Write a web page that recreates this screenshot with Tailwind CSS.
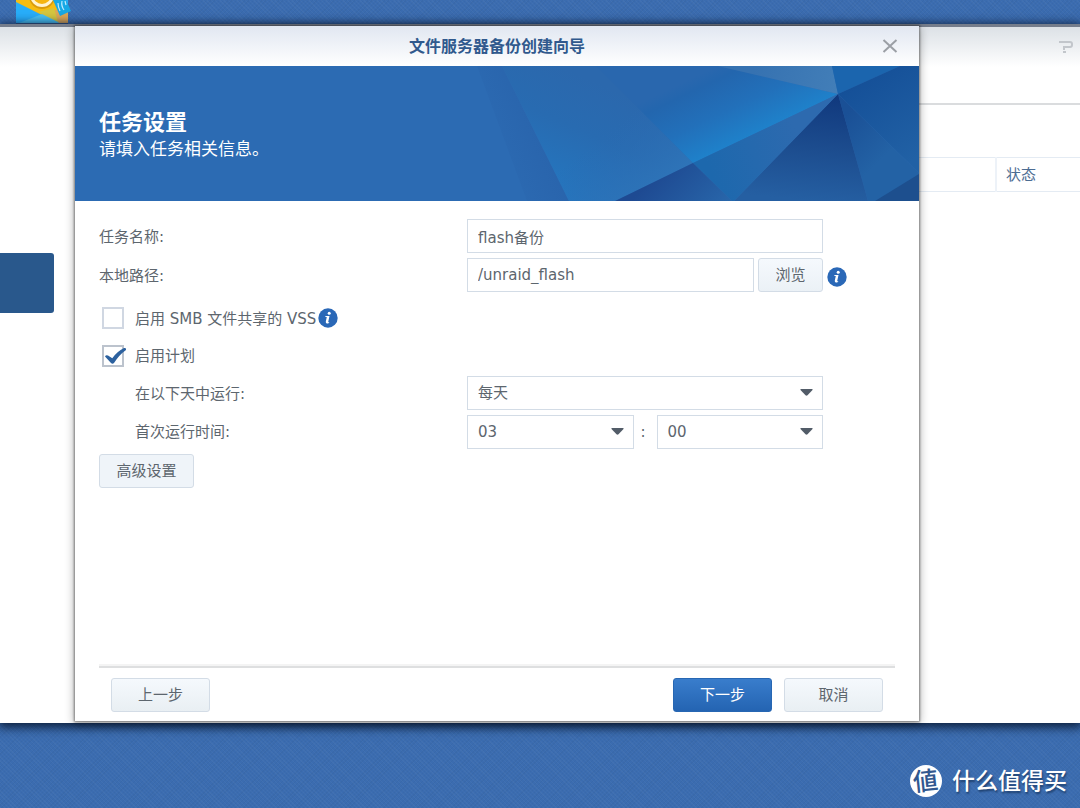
<!DOCTYPE html>
<html lang="zh-CN">
<head>
<meta charset="utf-8">
<meta name="viewport" content="width=device-width, initial-scale=1">
<title>文件服务器备份创建向导</title>
<script src="https://cdn.jsdelivr.net/npm/@tailwindcss/browser@4"></script>
</head>
<body class="flex min-h-screen flex-col overflow-x-hidden bg-[#3b6cb0] bg-[repeating-linear-gradient(45deg,#ffffff08_0px,#ffffff08_1px,transparent_1px,transparent_3px),repeating-linear-gradient(-45deg,#00000008_0px,#00000008_1px,transparent_1px,transparent_3px)] font-['DejaVu_Sans','Noto_Sans_CJK_SC',sans-serif] text-[15px] text-[#5d666e]">

<!-- Desktop strip -->
<header class="flex h-6 items-start pl-4">
  <svg class="h-6 w-14" viewBox="0 0 56 24" aria-hidden="true">
    <path d="M0 0H52V23H0Z" fill="#28aefa"/>
    <path d="M0 0H50V12L42 23L0 2Z" fill="#f6bd12"/>
    <path d="M3 23L34 11L43 23Z" fill="#48c2f5"/>
    <path d="M34 11L52 8V23H43Z" fill="#dfa755"/>
    <path d="M22 12L38 8L42 22L40 21Z" fill="#d6c63e"/>
    <circle cx="26" cy="-4" r="13" fill="#d99b0c"/>
    <circle cx="26" cy="-5" r="12" fill="#fff3cf"/>
    <circle cx="26" cy="-5" r="9" fill="#f6b511"/>
    <path d="M37 0H50L55 11L44 16Z" fill="#17a9e6"/>
    <path d="M42 3Q42 7 44 11M46 1Q45 6 48 10M49 1L50 5" stroke="#bdeaff" stroke-width="1.2" fill="none"/>
    <path d="M0 23.5H52" stroke="#315382"/>
  </svg>
</header>

<div class="relative flex h-[699px] flex-none bg-white shadow-[0_2px_10px_2px_#0b1c38]">
  <!-- Window underneath -->
  <section class="flex flex-1 flex-col border-t-3 border-[#757d8b]" aria-label="备份">
    <div class="flex h-10 flex-none items-center justify-end bg-linear-to-b from-[#dce1e6] to-white pr-[6px]">
      <button aria-label="帮助" class="text-[#c2c6cb]">
        <svg class="h-4 w-4" viewBox="0 0 16 16" fill="none" stroke="currentColor" stroke-width="2"><path d="M1 3H12Q14 3 14 5V6Q14 8 12 8H6V11"/><path d="M5 13H8"/></svg>
      </button>
    </div>
    <div class="flex flex-1">
      <nav class="w-[75px] pt-[186px] pr-[21px]"><a href="#" aria-label="任务" class="block h-[60px] rounded-r-[3px] bg-[#29588c]"></a></nav>
      <div class="flex-1">
        <div class="h-[38px] border-b-2 border-[#dadcde]"></div>
        <table class="mt-[52px] w-full table-fixed border-collapse border-y border-[#e4ebf3] text-[#4c6c92]">
          <thead><tr class="h-[34px]"><td class="border-r-2 border-[#edf2f8]"></td><th class="w-[84px] pt-[2px] pl-[9px] text-left text-[15px] font-normal">状态</th></tr></thead>
        </table>
      </div>
    </div>
  </section>

  <!-- Wizard dialog -->
  <main role="dialog" aria-labelledby="title" class="absolute top-[2px] right-[161px] bottom-[2px] left-[75px] flex flex-col bg-white shadow-[0_0_2px_1px_#00000066,0_2px_9px_1px_#0000004d]">
    <div class="grid h-10 flex-none grid-cols-[49px_1fr_40px] items-center bg-linear-to-b from-[#e1e7f1] to-white pr-[9px]">
      <h1 id="title" class="col-start-2 pt-[2px] text-center text-base leading-none font-bold text-[#30598d]">文件服务器备份创建向导</h1>
      <button aria-label="关闭" class="flex justify-center text-[#9b9fa5]">
        <svg class="h-4 w-4" viewBox="0 0 16 16" fill="none" stroke="currentColor" stroke-width="2"><path d="M1.500 2L14.500 14M14.500 2L1.500 14"/></svg>
      </button>
    </div>

    <div class="flex h-[135px] flex-none justify-between bg-[#2c6bb3] text-white">
      <div class="pt-[45px] pl-6 whitespace-nowrap">
        <h2 class="text-[22px] leading-6 font-bold">任务设置</h2>
        <p class="mt-[2px] text-[17px] leading-6">请填入任务相关信息。</p>
      </div>
      <svg class="h-[135px] w-[442px] flex-none" viewBox="402 0 442 135" aria-hidden="true">
        <defs>
          <linearGradient id="a" gradientUnits="userSpaceOnUse" x1="402" y1="70" x2="465" y2="45"><stop offset="0" stop-color="#2c6bb3"/><stop offset="1" stop-color="#2964ac"/></linearGradient>
          <linearGradient id="b" gradientUnits="userSpaceOnUse" x1="480" y1="135" x2="530" y2="20"><stop offset="0" stop-color="#2478c1"/><stop offset=".6" stop-color="#286bb1"/><stop offset="1" stop-color="#2b68ad"/></linearGradient>
          <linearGradient id="c" gradientUnits="userSpaceOnUse" x1="625" y1="98" x2="590" y2="25"><stop offset="0" stop-color="#1e83cc"/><stop offset=".45" stop-color="#2270ba"/><stop offset=".85" stop-color="#2366ae"/><stop offset="1" stop-color="#2967ae"/></linearGradient>
          <linearGradient id="d" gradientUnits="userSpaceOnUse" x1="630" y1="90" x2="720" y2="60"><stop offset="0" stop-color="#1d68ad"/><stop offset="1" stop-color="#2d6aaf"/></linearGradient>
          <linearGradient id="e" gradientUnits="userSpaceOnUse" x1="750" y1="28" x2="740" y2="135"><stop offset="0" stop-color="#10387d"/><stop offset=".5" stop-color="#1c4c8e"/><stop offset="1" stop-color="#255fa2"/></linearGradient>
          <linearGradient id="f" gradientUnits="userSpaceOnUse" x1="590" y1="100" x2="640" y2="150"><stop offset="0" stop-color="#1e4a92"/><stop offset="1" stop-color="#2866aa"/></linearGradient>
          <linearGradient id="g" gradientUnits="userSpaceOnUse" x1="790" y1="10" x2="844" y2="90"><stop offset="0" stop-color="#155098"/><stop offset="1" stop-color="#2161a5"/></linearGradient>
          <linearGradient id="h" gradientUnits="userSpaceOnUse" x1="770" y1="50" x2="810" y2="90"><stop offset="0" stop-color="#1a5096"/><stop offset="1" stop-color="#2362a5"/></linearGradient>
          <linearGradient id="i" gradientUnits="userSpaceOnUse" x1="680" y1="0" x2="763" y2="20"><stop offset="0" stop-color="#3672b1"/><stop offset="1" stop-color="#427eb8"/></linearGradient>
          <linearGradient id="j" gradientUnits="userSpaceOnUse" x1="550" y1="50" x2="600" y2="110"><stop offset="0" stop-color="#2b6bb2" stop-opacity="0"/><stop offset="1" stop-color="#2e74b8"/></linearGradient>
        </defs>
        <path d="M402 0H427L494 135H452Z" fill="url(#a)"/>
        <path d="M427 0H700L618 97L540 135H494Z" fill="url(#b)"/>
        <path d="M525 5L618 97L540 135H494L427 0Z" fill="url(#j)"/>
        <path d="M521 0H643L763 28L618 97Z" fill="url(#c)"/>
        <path d="M643 0H757L763 28Z" fill="url(#i)"/>
        <path d="M757 0H825L763 28Z" fill="#1b65ae"/>
        <path d="M825 0H844V107L763 28Z" fill="url(#g)"/>
        <path d="M763 28L844 107V135H793Z" fill="url(#h)"/>
        <path d="M844 108V135H800Z" fill="#1d4f8e"/>
        <path d="M763 28L793 135H659Z" fill="url(#e)"/>
        <path d="M763 28L659 135H657L618 97Z" fill="url(#d)"/>
        <path d="M618 97L657 135H540Z" fill="url(#f)"/>
      </svg>
    </div>

    <form class="flex flex-1 flex-col px-6 pt-[18px]">
      <div class="mr-[72px] grid grid-cols-[368px_1fr] items-center">
        <label for="name" class="pt-[2px]">任务名称:</label>
        <input id="name" type="text" value="flash备份" class="h-[34px] w-full border border-[#d3dce6] px-[10px] outline-none">

        <label for="path" class="mt-[5px] pt-[2px]">本地路径:</label>
        <div class="mt-[5px] -mr-6 flex items-center">
          <input id="path" type="text" value="/unraid_flash" class="mr-1 h-[34px] min-w-0 flex-1 border border-[#d3dce6] px-[10px] outline-none">
          <button type="button" class="h-[34px] w-[65px] rounded-[3px] border border-[#d3dce6] bg-linear-to-b from-[#f5f9fd] to-[#ebf1f6]">浏览</button>
          <svg class="mt-1 ml-1 h-5 w-5" viewBox="0 0 20 20" role="img" aria-label="信息"><circle cx="10" cy="10" r="9.700" fill="#2a68b7"/><circle cx="11.200" cy="5.200" r="1.500" fill="#fff"/><path d="M7.500 8H11.500L10.200 14Q10.400 14.500 11.300 14L11 15Q7.400 16.500 7.800 13.600L8.800 9.100H7.300Z" fill="#fff"/></svg>
        </div>
      </div>

      <div class="mt-[9px] flex h-[34px] items-center pl-[3px]">
        <input id="vss" type="checkbox" class="mr-[11px] h-[22px] w-[22px] appearance-none border-2 border-[#d0d7e2] bg-white">
        <label for="vss" class="pt-[2px]">启用 SMB 文件共享的 VSS</label>
        <svg class="ml-[2px] h-5 w-5" viewBox="0 0 20 20" role="img" aria-label="信息"><circle cx="10" cy="10" r="9.700" fill="#2a68b7"/><circle cx="11.200" cy="5.200" r="1.500" fill="#fff"/><path d="M7.500 8H11.500L10.200 14Q10.400 14.500 11.300 14L11 15Q7.400 16.500 7.800 13.600L8.800 9.100H7.300Z" fill="#fff"/></svg>
      </div>
      <div class="mt-1 flex h-[34px] items-center pl-[3px]">
        <span class="relative mr-[11px] h-[22px] w-[22px]">
          <input id="plan" type="checkbox" checked class="block h-[22px] w-[22px] appearance-none border-2 border-[#bcc3cd] bg-white">
          <svg class="pointer-events-none absolute top-0 left-0 h-[22px] w-6" viewBox="0 0 24 22" aria-hidden="true"><path d="M3 11.500Q4 9.500 6 10.500L10.300 13.200Q15 6.500 22 3Q24.500 2.500 24 5Q17 10 12 18Q10.500 19.500 9 18Z" fill="#2c619f"/></svg>
        </span>
        <label for="plan">启用计划</label>
      </div>

      <div class="mt-[3px] mr-[72px] grid grid-cols-[368px_1fr] items-center gap-y-[5px]">
        <label for="days" class="pt-[2px] pl-9">在以下天中运行:</label>
        <div class="relative">
          <select id="days" class="block h-[34px] w-full appearance-none border border-[#d3dce6] bg-white px-[10px] outline-none"><option>每天</option></select>
          <svg class="pointer-events-none absolute top-[13px] right-[10px] h-[7px] w-[13px]" viewBox="0 0 13 7" fill="#525c68" aria-hidden="true"><path d="M1 0H12Q13 0 12.500 1L7.500 6.300Q6.500 7 5.500 6.300L.5 1Q0 0 1 0Z"/></svg>
        </div>
        <label for="hour" class="pl-9">首次运行时间:</label>
        <div class="flex items-center">
          <div class="relative flex-1">
            <select id="hour" class="block h-[34px] w-full appearance-none border border-[#d3dce6] bg-white px-[10px] outline-none"><option>03</option></select>
            <svg class="pointer-events-none absolute top-[13px] right-[10px] h-[7px] w-[13px]" viewBox="0 0 13 7" fill="#525c68" aria-hidden="true"><path d="M1 0H12Q13 0 12.500 1L7.500 6.300Q6.500 7 5.500 6.300L.5 1Q0 0 1 0Z"/></svg>
          </div>
          <span class="w-[23px] pr-1 text-center">:</span>
          <div class="relative flex-1">
            <select aria-label="分钟" class="block h-[34px] w-full appearance-none border border-[#d3dce6] bg-white px-[10px] outline-none"><option>00</option></select>
            <svg class="pointer-events-none absolute top-[13px] right-[10px] h-[7px] w-[13px]" viewBox="0 0 13 7" fill="#525c68" aria-hidden="true"><path d="M1 0H12Q13 0 12.500 1L7.500 6.300Q6.500 7 5.500 6.300L.5 1Q0 0 1 0Z"/></svg>
          </div>
        </div>
      </div>
      <button type="button" class="mt-[5px] h-[34px] w-[95px] rounded-[3px] border border-[#d3dce6] bg-[#eff4f9]">高级设置</button>

      <div class="mt-auto flex h-[55px] items-center gap-3 border-t-2 border-[#dedfe0] px-3 shadow-[0_-2px_0_#f4f4f4]">
        <button type="button" class="mr-auto h-[34px] w-[99px] rounded-[3px] border border-[#d3dce6] bg-linear-to-b from-[#f5f9fd] to-[#e9eff3] pt-[2px]">上一步</button>
        <button type="submit" class="h-[34px] w-[99px] rounded-[3px] border border-[#2767b3] bg-linear-to-b from-[#397dcc] to-[#2464b2] pt-[2px] text-white">下一步</button>
        <button type="button" class="h-[34px] w-[99px] rounded-[3px] border border-[#d3dce6] bg-linear-to-b from-[#f5f9fd] to-[#e9eff3] pt-[2px]">取消</button>
      </div>
    </form>
  </main>
</div>

<footer class="mt-auto flex items-center justify-end gap-[10px] pr-[13px] pb-[11px] text-white">
  <span class="flex h-8 w-8 items-center justify-center rounded-full bg-white text-[25px] leading-none font-medium text-[#31588f]"><span class="-rotate-6">値</span></span>
  <span class="text-[23px] leading-8 font-medium [text-shadow:1px_2px_2px_#1f416f]">什么值得买</span>
</footer>
</body>
</html>
